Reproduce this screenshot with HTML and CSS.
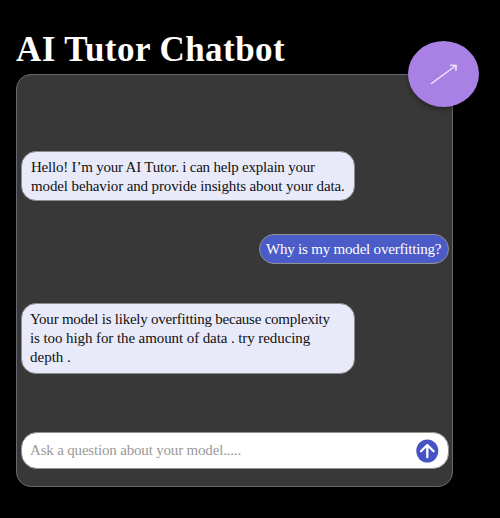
FILE: index.html
```html
<!DOCTYPE html>
<html lang="en">
<head>
<meta charset="utf-8">
<title>AI Tutor Chatbot</title>
<link rel="stylesheet" href="styles.css">
</head>
<body>
<main class="chat">
  <h1 class="title">AI Tutor Chatbot</h1>
  <section class="panel">
    <div class="bubble tutor first"><span class="line l1">Hello! I’m your AI Tutor. i can help explain your</span><span class="line l2">model behavior and provide insights about your data.</span></div>
    <div class="bubble user"><span class="line l3">Why is my model overfitting?</span></div>
    <div class="bubble tutor answer"><span class="line l4">Your model is likely overfitting because complexity</span><span class="line l5">is too high for the amount of data . try reducing</span><span class="line l6">depth .</span></div>
    <div class="composer">
      <span class="line placeholder">Ask a question about your model.....</span>
      <svg class="send" viewBox="0 0 23 24"><ellipse cx="11.3" cy="12" rx="11" ry="11.5"/><path d="M11.3 18.2V6.2M5 12.2l6.3-6.2 6.3 6.2"/></svg>
    </div>
    <div class="badge"><svg viewBox="0 0 71 66"><path d="M23.5 42.5 48 24.5M42.8 24.2l5.4.2-.3 5"/></svg></div>
  </section>
</main>
</body>
</html>
```
FILE: styles.css
```css
* { box-sizing: border-box; }
body { margin: 0; background: #000; font-family: "Liberation Serif", serif; }
.chat { width: 500px; height: 518px; padding: 30px 47px 31px 16px; display: flex; flex-direction: column; overflow: hidden; }
.title { margin: 0; height: 44px; flex: none; font-size: 35px; line-height: 40px; font-weight: 700; letter-spacing: .45px; color: #fff; white-space: nowrap; }
.panel { position: relative; width: 437px; height: 413px; padding: 76px 3px 17px 4px; border: 1px solid #686873; border-radius: 15px; background: #383838; display: flex; flex-direction: column; }
.bubble { border: 1px solid #8c8c8c; font-size: 15px; line-height: 19px; }
.line { display: block; width: max-content; white-space: nowrap; font-feature-settings: "liga" 1; }
.l1 { letter-spacing: -.21px; }
.l2 { letter-spacing: -.12px; }
.l3 { letter-spacing: -.2px; }
.l4 { letter-spacing: -.235px; }
.l5 { letter-spacing: -.09px; }
.tutor { width: 334px; border-radius: 15px; background: #e8eafa; color: #111; }
.first { height: 50px; padding: 6px 0 0 9px; }
.user { align-self: flex-end; width: 190px; height: 30px; margin-top: 33px; padding: 5px 0 0 6px; border-radius: 15px; border-color: #929292; background: #4b5cc9; color: #fff; }
.answer { height: 71px; margin-top: 39px; padding: 6px 0 0 8px; }
.composer { height: 37px; margin-top: 58px; padding: 0 9px 0 8px; border: 1px solid #929292; border-radius: 16px; background: #fff; display: flex; align-items: center; justify-content: space-between; }
.placeholder { color: #999; font-size: 15px; letter-spacing: -.18px; }
.send { width: 23px; height: 24px; fill: #4653c5; }
.send path { fill: none; stroke: #fff; stroke-width: 2.3; stroke-linecap: round; stroke-linejoin: round; }
.badge { position: absolute; top: -34px; right: -27px; width: 71px; height: 66px; border-radius: 50%; background: #a981e4; box-shadow: 0 3px 5px rgba(0, 0, 0, .3); }
.badge svg { display: block; width: 71px; height: 66px; }
.badge path { fill: none; stroke: #f0e6fc; stroke-width: 1.5; stroke-linecap: round; stroke-linejoin: round; }
```
